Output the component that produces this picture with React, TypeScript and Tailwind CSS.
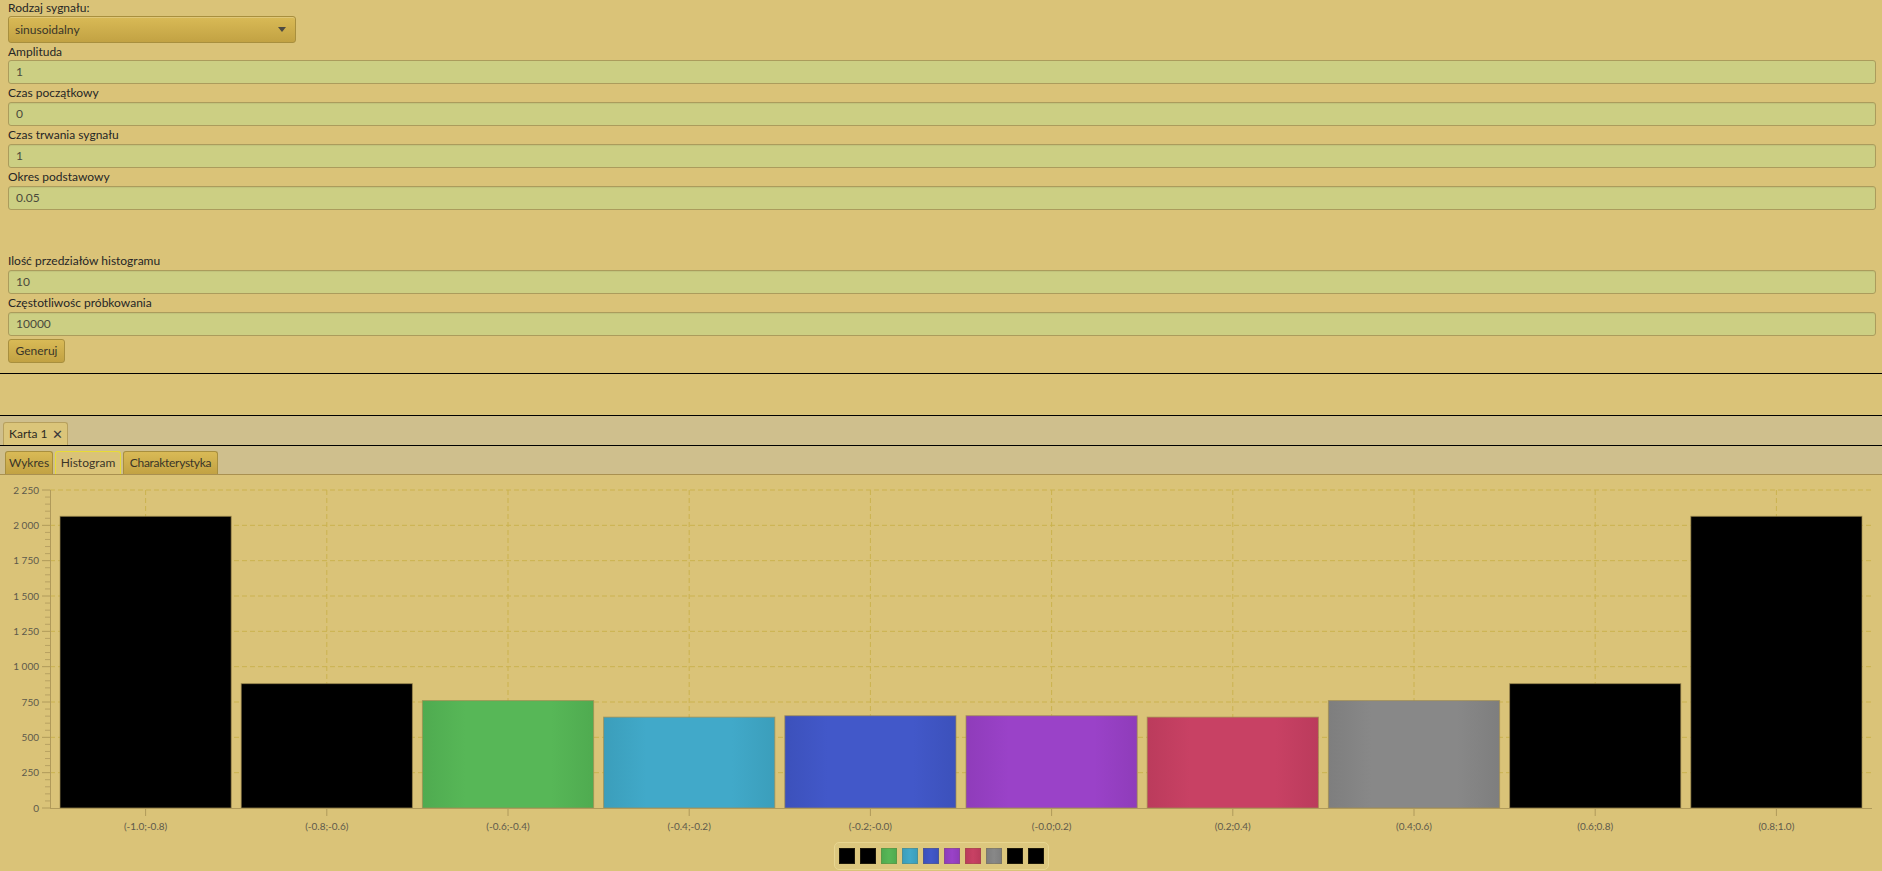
import React from "react";

const values = [2064, 880, 760, 643, 653, 653, 643, 760, 880, 2064];
const colors = ["#000000", "#000000", "#57b757", "#41a9c9", "#4258c9", "#9a42c8", "#c84164", "#888888", "#000000", "#000000"];
const darker = ["#000000", "#000000", "#4fab50", "#3b9ebb", "#3c51bb", "#8f3cba", "#bb3b5c", "#7e7e7e", "#000000", "#000000"];
const labels = ["(-1.0;-0.8)", "(-0.8;-0.6)", "(-0.6;-0.4)", "(-0.4;-0.2)", "(-0.2;-0.0)", "(-0.0;0.2)", "(0.2;0.4)", "(0.4;0.6)", "(0.6;0.8)", "(0.8;1.0)"];
const yLabels = ["2 250", "2 000", "1 750", "1 500", "1 250", "1 000", "750", "500", "250", "0"];

const TOP = 15;
const BOTTOM = 333;
const LEFT = 50;
const RIGHT = 1872;
const CW = (RIGHT - LEFT - 10) / 10;
const yOf = (v: number) => BOTTOM - (v * (BOTTOM - TOP)) / 2250;

function Field({ label, value }: { label: string; value: string }) {
  return (
    <div>
      <div className="h-[18px] leading-[18px] text-[12px] text-[#262626]">{label}</div>
      <div className="h-[24px] rounded-[3px] border border-[#ab9c5c] bg-[#cccf83] px-[7px] text-[12px] leading-[22px] text-[#4a4a3c] shadow-[inset_0_1px_1px_rgba(0,0,0,0.06)]">
        {value}
      </div>
    </div>
  );
}

function Chart() {
  const majors = Array.from({ length: 10 }, (_, i) => TOP + (i * (BOTTOM - TOP)) / 9);
  const minors: number[] = [];
  for (let i = 0; i < 45; i++) {
    if (i % 5 !== 0) minors.push(TOP + (i * (BOTTOM - TOP)) / 45);
  }
  const centers = values.map((_, k) => LEFT + 5 + CW * (k + 0.5));
  return (
    <svg width={1882} height={362} className="block" fontFamily="Lato, sans-serif">
      <defs>
        {colors.map((c, i) => (
          <linearGradient key={i} id={`g${i}`} x1="0" y1="0" x2="1" y2="0">
            <stop offset="0" stopColor={darker[i]} />
            <stop offset="0.25" stopColor={c} />
            <stop offset="0.5" stopColor={c} />
            <stop offset="0.75" stopColor={c} />
            <stop offset="1" stopColor={darker[i]} />
          </linearGradient>
        ))}
      </defs>
      {majors.slice(0, 9).map((y, i) => (
        <line key={`h${i}`} x1={LEFT} x2={RIGHT} y1={y} y2={y} stroke="#cbb24f" strokeWidth={1} strokeDasharray="5 3" />
      ))}
      {centers.map((x, i) => (
        <line key={`v${i}`} x1={x} x2={x} y1={TOP} y2={BOTTOM} stroke="#cbb24f" strokeWidth={1} strokeDasharray="5 3" />
      ))}
      {values.map((v, k) => (
        <rect
          key={`b${k}`}
          x={centers[k] - CW / 2 + 5}
          y={yOf(v)}
          width={CW - 10}
          height={BOTTOM - yOf(v)}
          fill={`url(#g${k})`}
          stroke="rgba(160,140,80,0.7)"
          strokeWidth={1}
        />
      ))}
      <line x1={LEFT + 0.5} x2={LEFT + 0.5} y1={TOP} y2={BOTTOM} stroke="#b09a5a" strokeWidth={1} />
      <line x1={LEFT} x2={RIGHT} y1={BOTTOM + 0.5} y2={BOTTOM + 0.5} stroke="#b09a5a" strokeWidth={1} />
      {majors.map((y, i) => (
        <line key={`mt${i}`} x1={42} x2={LEFT} y1={y} y2={y} stroke="#b09a5a" strokeWidth={1} />
      ))}
      {minors.map((y, i) => (
        <line key={`nt${i}`} x1={45} x2={LEFT} y1={y} y2={y} stroke="#b8a262" strokeWidth={1} />
      ))}
      {majors.map((y, i) => (
        <text key={`yl${i}`} x={39} y={y + 3.5} textAnchor="end" fontSize={10} fill="#5e5a4b">
          {yLabels[i]}
        </text>
      ))}
      {centers.map((x, i) => (
        <line key={`xt${i}`} x1={x} x2={x} y1={BOTTOM} y2={BOTTOM + 8} stroke="#b09a5a" strokeWidth={1} />
      ))}
      {centers.map((x, i) => (
        <text key={`xl${i}`} x={x} y={355} textAnchor="middle" fontSize={10} fill="#5e5a4b">
          {labels[i]}
        </text>
      ))}
    </svg>
  );
}

export default function App() {
  const gold = "bg-gradient-to-b from-[#d9ba56] to-[#c2a243] border border-[#a88f3e]";
  return (
    <div className="w-[1882px] h-[871px] overflow-hidden bg-[#dac378] font-['Lato',sans-serif] text-[#262626]">
      <div className="pl-2 pr-[6px]">
        <div className="h-4 leading-4 text-[12px]">Rodzaj sygnału:</div>
        <div className={`w-[288px] h-[27px] rounded-[3px] ${gold} flex items-center justify-between pl-[6px] pr-[9px] text-[12px] text-[#3a3528] shadow-[inset_0_1px_0_rgba(255,255,255,0.2)]`}>
          <span>sinusoidalny</span>
          <svg width="8" height="5" viewBox="0 0 8 5">
            <polygon points="0,0 8,0 4,5" fill="#4d4a42" />
          </svg>
        </div>
        <div className="h-[17px] leading-[17px] text-[12px]">Amplituda</div>
        <div className="h-[24px] rounded-[3px] border border-[#ab9c5c] bg-[#cccf83] px-[7px] text-[12px] leading-[22px] text-[#4a4a3c]">1</div>
        <Field label="Czas początkowy" value="0" />
        <Field label="Czas trwania sygnału" value="1" />
        <Field label="Okres podstawowy" value="0.05" />
        <div className="h-[42px]" />
        <Field label="Ilość przedziałów histogramu" value="10" />
        <Field label="Częstotliwośc próbkowania" value="10000" />
        <div className="pt-px">
          <button className={`h-[24px] w-[57px] rounded-[3px] ${gold} text-[12px] text-[#3a3528] leading-[22px]`}>Generuj</button>
        </div>
      </div>
      <div className="h-[10px]" />
      <div className="h-px bg-black" />
      <div className="h-[41px]" />
      <div className="h-px bg-black" />
      <div className="h-[29px] bg-[#cfbf8d] flex items-end pl-[3px]">
        <div className="w-[65px] h-[23px] rounded-t-[3px] border border-b-0 border-[#b7a05e] bg-[#dbc57a] flex items-center gap-[4px] pl-[5px] text-[12px] text-[#2e2a22]">
          <span>Karta 1</span>
          <span className="text-[13px] leading-none text-[#3a3a3a]">✕</span>
        </div>
      </div>
      <div className="h-px bg-black" />
      <div className="h-[29px] bg-[#cfbf8d] border-b border-[#a99050] flex items-end gap-[2px] pl-[5px]">
        <div className={`w-[48px] h-[23px] rounded-t-[3px] ${gold} border-b-0 text-center text-[12px] leading-[22px] text-[#3a3528]`}>Wykres</div>
        <div className="w-[66px] h-[23px] rounded-t-[3px] border border-b-0 border-[#e8dc34] bg-[#dac378] text-center text-[12px] leading-[22px] text-[#3a3528]">Histogram</div>
        <div className={`w-[95px] h-[23px] rounded-t-[3px] ${gold} border-b-0 text-center text-[12px] leading-[22px] tracking-[-0.3px] text-[#3a3528]`}>Charakterystyka</div>
      </div>
      <Chart />
      <div className="flex justify-center mt-[5px]">
        <div className="flex gap-[5px] rounded-[5px] border border-[#e8d690] bg-[#dcc77e] px-[4px] py-[5px]">
          {colors.map((c, i) => (
            <div
              key={i}
              className="w-4 h-4 border border-[rgba(120,100,40,0.25)]"
              style={{ background: `linear-gradient(to right, ${darker[i]}, ${c}, ${darker[i]})` }}
            />
          ))}
        </div>
      </div>
    </div>
  );
}
